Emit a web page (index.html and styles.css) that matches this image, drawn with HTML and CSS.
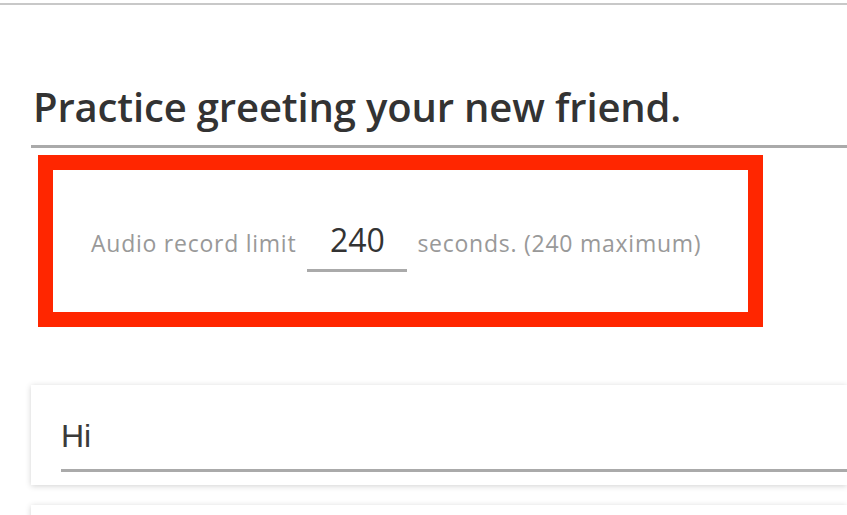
FILE: index.html
```html
<!DOCTYPE html>
<html lang="en">
<head>
<meta charset="utf-8">
<title>Practice</title>
<link rel="stylesheet" href="styles.css">
</head>
<body>
<div class="topbar"></div>
<main class="content">
  <h1 class="title">Practice greeting your new friend.</h1>
  <section class="limit-box">
    <span class="label">Audio record limit</span>
    <span class="value">240</span>
    <span class="label">seconds. (240 maximum)</span>
  </section>
  <div class="card">
    <div class="answer">Hi</div>
  </div>
  <div class="card card-next"></div>
</main>
</body>
</html>
```
FILE: styles.css
```css
html, body {
  margin: 0;
  padding: 0;
  background: #fff;
  overflow: hidden;
  height: 100%;
}
body {
  font-family: "Open Sans", "Liberation Sans", sans-serif;
}
.topbar {
  margin-top: 3px;
  height: 2px;
  background: #c8c8c8;
}
.content {
  padding-left: 31px;
}
.title {
  margin: 75px 0 0 0;
  padding: 0 0 11px 2px;
  font-size: 40px;
  font-weight: 600;
  letter-spacing: -0.15px;
  line-height: 54px;
  color: #333;
  border-bottom: 3px solid #aaa;
}
.limit-box {
  box-sizing: border-box;
  margin: 7px 0 0 7px;
  width: 725px;
  height: 172px;
  border: 15px solid #ff2600;
  padding: 50px 0 0 38px;
  display: flex;
  align-items: baseline;
}
.label {
  font-size: 23px;
  letter-spacing: 0.75px;
  line-height: 30px;
  color: #999;
}
.value {
  margin: 0 10px 0 11px;
  width: 100px;
  text-align: center;
  font-size: 32px;
  line-height: 40px;
  padding-bottom: 9px;
  color: #333;
  border-bottom: 3px solid #aaa;
}
.card {
  box-sizing: border-box;
  margin-top: 58px;
  height: 100px;
  background: #fff;
  box-shadow: 0 1px 6px rgba(0, 0, 0, 0.18);
  padding: 31px 0 0 30px;
}
.card-next {
  margin-top: 20px;
}
.answer {
  font-family: "Liberation Sans", Arial, sans-serif;
  font-size: 32px;
  line-height: 40px;
  padding-bottom: 13px;
  color: #3a3a3a;
  border-bottom: 3px solid #aaa;
}
```
